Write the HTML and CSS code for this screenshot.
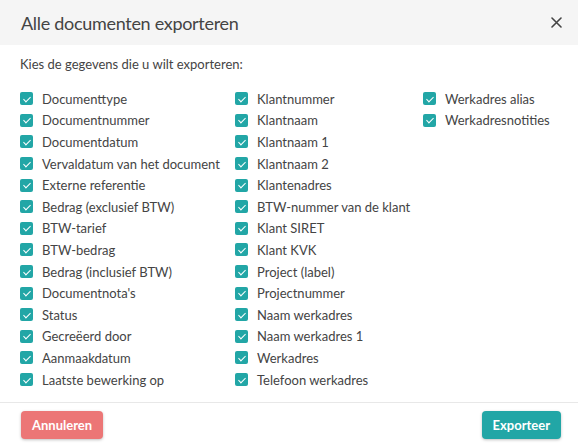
FILE: index.html
```html
<!DOCTYPE html>
<html>

<head>
  <meta charset="UTF-8" />
  <title>Alle documenten exporteren</title>
  <link rel="stylesheet" href="styles.css">
</head>

<body>
  <div class="dialog">
    <div class="dialog-header">
      <div class="dialog-title">Alle documenten exporteren</div>
      <button class="close-btn" aria-label="Sluiten">
        <svg width="11" height="11" viewBox="0 0 11 11">
          <path d="M1 1 L10 10 M10 1 L1 10" stroke="#444" stroke-width="1.6" stroke-linecap="round" />
        </svg>
      </button>
    </div>

    <div class="dialog-body">
      <div class="intro">Kies de gegevens die u wilt exporteren:</div>

      <div class="field-columns">
        <div class="field-column col-1">
          <label class="field"><span class="check"></span>Documenttype</label>
          <label class="field"><span class="check"></span>Documentnummer</label>
          <label class="field"><span class="check"></span>Documentdatum</label>
          <label class="field"><span class="check"></span>Vervaldatum van het document</label>
          <label class="field"><span class="check"></span>Externe referentie</label>
          <label class="field"><span class="check"></span>Bedrag (exclusief BTW)</label>
          <label class="field"><span class="check"></span>BTW-tarief</label>
          <label class="field"><span class="check"></span>BTW-bedrag</label>
          <label class="field"><span class="check"></span>Bedrag (inclusief BTW)</label>
          <label class="field"><span class="check"></span>Documentnota's</label>
          <label class="field"><span class="check"></span>Status</label>
          <label class="field"><span class="check"></span>Gecreëerd door</label>
          <label class="field"><span class="check"></span>Aanmaakdatum</label>
          <label class="field"><span class="check"></span>Laatste bewerking op</label>
        </div>
        <div class="field-column col-2">
          <label class="field"><span class="check"></span>Klantnummer</label>
          <label class="field"><span class="check"></span>Klantnaam</label>
          <label class="field"><span class="check"></span>Klantnaam 1</label>
          <label class="field"><span class="check"></span>Klantnaam 2</label>
          <label class="field"><span class="check"></span>Klantenadres</label>
          <label class="field"><span class="check"></span>BTW-nummer van de klant</label>
          <label class="field"><span class="check"></span>Klant SIRET</label>
          <label class="field"><span class="check"></span>Klant KVK</label>
          <label class="field"><span class="check"></span>Project (label)</label>
          <label class="field"><span class="check"></span>Projectnummer</label>
          <label class="field"><span class="check"></span>Naam werkadres</label>
          <label class="field"><span class="check"></span>Naam werkadres 1</label>
          <label class="field"><span class="check"></span>Werkadres</label>
          <label class="field"><span class="check"></span>Telefoon werkadres</label>
        </div>
        <div class="field-column col-3">
          <label class="field"><span class="check"></span>Werkadres alias</label>
          <label class="field"><span class="check"></span>Werkadresnotities</label>
        </div>
      </div>
    </div>

    <div class="dialog-footer">
      <button class="btn btn-cancel">Annuleren</button>
      <button class="btn btn-export">Exporteer</button>
    </div>
  </div>
</body>

</html>
```

FILE: styles.css
```css
body {
  margin: 0;
  font-family: Lato, "Noto Sans", Arial, sans-serif;
  background-color: white;
  color: #444;
}

.dialog {
  width: 578px;
  height: 447px;
  display: flex;
  flex-direction: column;
  background-color: white;
}

/* Header */
.dialog-header {
  height: 45px;
  padding: 0 16px 0 21px;
  background-color: #f5f5f5;
  display: flex;
  align-items: center;
  justify-content: space-between;
}

.dialog-title {
  font-size: 18px;
  letter-spacing: -0.3px;
  color: #444;
}

.close-btn {
  background: none;
  border: none;
  padding: 0;
  width: 11px;
  height: 11px;
  cursor: pointer;
  display: flex;
}

/* Body */
.dialog-body {
  flex: 1;
  padding: 0 20px;
}

.intro {
  font-size: 13px;
  line-height: 18px;
  margin-top: 10px;
  margin-bottom: 15px;
}

.field-columns {
  display: flex;
}

.col-1 {
  width: 215px;
}

.col-2 {
  width: 188px;
}

.field {
  display: flex;
  align-items: center;
  height: 21.6px;
  font-size: 13px;
  color: #444;
  cursor: pointer;
}

.check {
  position: relative;
  width: 13px;
  height: 13px;
  margin-right: 9px;
  border-radius: 2px;
  background-color: #22a6a6;
  flex-shrink: 0;
}

.check::after {
  content: "";
  position: absolute;
  left: 4.5px;
  top: 2.5px;
  width: 3px;
  height: 6px;
  border-right: 1.3px solid white;
  border-bottom: 1.3px solid white;
  transform: rotate(45deg);
}

/* Footer */
.dialog-footer {
  border-top: 1px solid #e8e8e8;
  padding: 8px 17px 8px 21px;
  display: flex;
  justify-content: space-between;
}

.btn {
  height: 28px;
  padding: 0 11px;
  border: none;
  border-radius: 4px;
  color: white;
  font-family: Lato, "Noto Sans", Arial, sans-serif;
  font-weight: bold;
  font-size: 13px;
  cursor: pointer;
  box-shadow: 0 1px 3px rgba(0, 0, 0, 0.25);
}

.btn-cancel {
  background-color: #ec7676;
}

.btn-export {
  background-color: #22a6a6;
}
```
